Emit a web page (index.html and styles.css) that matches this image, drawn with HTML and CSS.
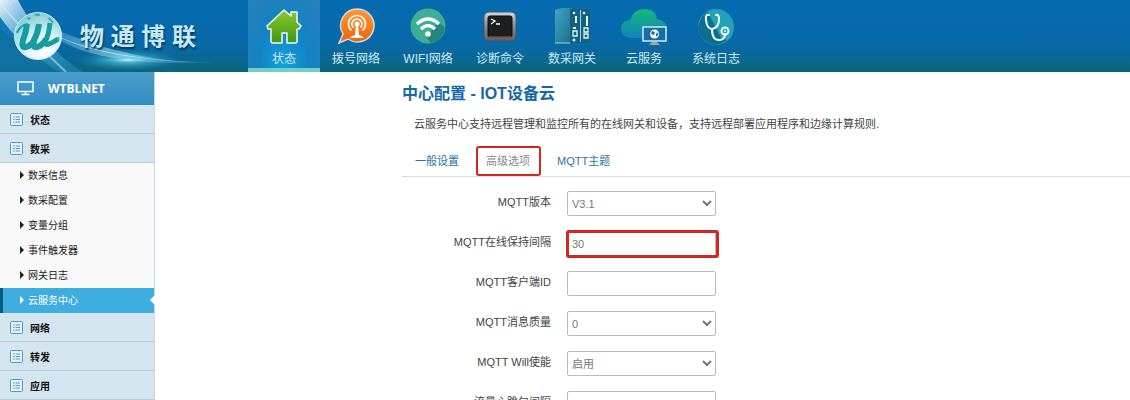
FILE: index.html
```html
<!DOCTYPE html>
<html lang="zh-CN">
<head>
  <meta charset="UTF-8">
  <title>中心配置 - IOT设备云</title>
  <link rel="stylesheet" href="styles.css">
</head>
<body>
  <header class="banner">
    <div class="brand">
      <svg class="brand-bg" viewBox="0 0 248 72" aria-hidden="true">
        <defs>
          <linearGradient id="beam" x1="0" y1="0" x2="1" y2="1">
            <stop offset="0" stop-color="#fff" stop-opacity=".9"/>
            <stop offset=".35" stop-color="#9ed8f5" stop-opacity=".55"/>
            <stop offset="1" stop-color="#2fb0cf" stop-opacity="0"/>
          </linearGradient>
          <linearGradient id="trail" x1="0" y1="0" x2="1" y2="0">
            <stop offset="0" stop-color="#7fd0f0" stop-opacity=".3"/>
            <stop offset=".55" stop-color="#d8f8ff"/>
            <stop offset="1" stop-color="#4ab8d8" stop-opacity="0"/>
          </linearGradient>
          <radialGradient id="flare">
            <stop offset="0" stop-color="#e8fcff"/>
            <stop offset=".25" stop-color="#7fdcf2" stop-opacity=".7"/>
            <stop offset="1" stop-color="#159cc8" stop-opacity="0"/>
          </radialGradient>
        </defs>
        <path d="M0 0H9C20 22 52 52 84 72H0Z" fill="#1e8fc4" opacity=".45"/>
        <path d="M0 0H18C28 20 48 46 80 72H60C32 55 12 34 0 17Z" fill="url(#beam)"/>
        <path d="M0 3C18 25 40 48 66 72" fill="none" stroke="#d9f1fc" stroke-width="2" opacity=".5"/>
        <path d="M0 28C24 50 42 62 58 72H0Z" fill="#0b6d9c" opacity=".7"/>
        <path d="M10 0C40 38 95 60 215 63" fill="none" stroke="url(#trail)" stroke-width="1"/>
        <path d="M30 18C62 50 105 65 205 63C135 60 85 44 30 18Z" fill="url(#trail)" opacity=".55"/>
        <ellipse cx="128" cy="60" rx="52" ry="11" fill="url(#flare)" opacity=".8"/>
        <ellipse cx="128" cy="60" rx="32" ry="3" fill="url(#flare)"/>
      </svg>
      <svg class="brand-ball" viewBox="0 0 48 50" aria-hidden="true">
        <defs>
          <radialGradient id="ball" cx=".6" cy=".8" r=".8">
            <stop offset="0" stop-color="#fff"/>
            <stop offset=".4" stop-color="#e2f5f6"/>
            <stop offset="1" stop-color="#84ccd6"/>
          </radialGradient>
        </defs>
        <circle cx="24" cy="25" r="23.5" fill="url(#ball)" stroke="#c9f0f4"/>
        <path d="M20 3L25 2L26 5L22 5ZM13 7l3-1 1 2-3 1ZM35 6l5 5-2 1-4-4ZM42 27l3-1 1 2-3 2Z" fill="#3ea9ae"/>
        <g fill="none" stroke="#169da3" stroke-linejoin="round">
          <path d="M3 22Q6 14 14 13" stroke-width="2"/>
          <path d="M13 13Q12 22 9 29Q7 37 12 36Q17 35 21 28" stroke-width="6"/>
          <path d="M25 13Q24 22 20 29Q18 37 23 36Q28 35 32 28" stroke-width="6"/>
          <path d="M36 12Q35 22 32 29Q30 35 35 33Q40 31 44 28" stroke-width="5"/>
        </g>
      </svg>
      <span class="brand-name">物 通 博 联</span>
    </div>
    <nav class="topnav">
      <a class="top-item current" href="#">
        <svg viewBox="0 0 40 40" aria-hidden="true">
          <defs><linearGradient id="house" x1="0" y1="0" x2="0" y2="1"><stop offset="0" stop-color="#8acb2c"/><stop offset="1" stop-color="#3f9517"/></linearGradient></defs>
          <path d="M20 4L27 10V6H33V16L37 20L35 23H33V35Q33 37 31 37H23V27H18V37H9Q7 37 7 35V23H4L3 20Z" fill="url(#house)" stroke="#f2faee" stroke-width="1.500" stroke-linejoin="round"/>
        </svg>
        <span>状态</span>
      </a>
      <a class="top-item" href="#">
        <svg viewBox="0 0 40 40" aria-hidden="true">
          <defs><linearGradient id="orange" x1="0" y1="0" x2="0" y2="1"><stop offset="0" stop-color="#ff9838"/><stop offset="1" stop-color="#e96408"/></linearGradient></defs>
          <path d="M21 3A16.500 16.500 0 1 1 12 33L3 37L7 28A16.500 16.500 0 0 1 21 3Z" fill="url(#orange)" stroke="#d9d6dc" stroke-width="1.500"/>
          <g fill="none" stroke="#fff" stroke-width="1.700" stroke-linecap="round">
            <path d="M15 24A8.500 8.500 0 1 1 27 24"/>
            <path d="M17 21A5 5 0 1 1 25 21"/>
          </g>
          <circle cx="21" cy="18" r="2.500" fill="#fff"/>
          <path d="M20 19H22L23 29Q27 30 28 32H14Q15 30 19 29Z" fill="#fff"/>
        </svg>
        <span>拨号网络</span>
      </a>
      <a class="top-item" href="#">
        <svg viewBox="0 0 40 40" aria-hidden="true">
          <circle cx="20" cy="20" r="17.500" fill="#3fae96"/>
          <path d="M31 16L37 22Q35 34 23 37L18 31Z" fill="#23867d"/>
          <g fill="none" stroke="#fff" stroke-width="3.200">
            <path d="M9 18Q20 8 31 18"/>
            <path d="M13 23Q20 16 27 23"/>
          </g>
          <circle cx="20" cy="28" r="2.800" fill="#fff"/>
        </svg>
        <span>WIFI网络</span>
      </a>
      <a class="top-item" href="#">
        <svg viewBox="0 0 40 40" aria-hidden="true">
          <defs><linearGradient id="metal" x1="0" y1="0" x2="0" y2="1"><stop offset="0" stop-color="#d3d7da"/><stop offset=".5" stop-color="#878d93"/><stop offset="1" stop-color="#5b6066"/></linearGradient></defs>
          <rect x="4" y="6" width="32" height="29" rx="5" fill="url(#metal)" stroke="#3f5670"/>
          <rect x="8" y="10" width="24" height="21" rx="2" fill="#1d1e22" stroke="#0b0b0d"/>
          <path d="M9 31H31" stroke="#a86d4c"/>
          <path d="M11 13l4 2-4 3M16 18h4" fill="none" stroke="#fff" stroke-width="1.300"/>
        </svg>
        <span>诊断命令</span>
      </a>
      <a class="top-item" href="#">
        <svg viewBox="0 0 40 40" aria-hidden="true">
          <defs><linearGradient id="rack" x1="0" y1="0" x2="1" y2="1"><stop offset="0" stop-color="#40a6c4"/><stop offset="1" stop-color="#176e8b"/></linearGradient></defs>
          <path d="M3 4L10 2H20V37H3Z" fill="url(#rack)"/>
          <path d="M18 3H28V37H18ZM29 3H38V37H29Z" fill="#14617f"/>
          <path d="M28.500 4V36M3 37H18" stroke="#a3d4df"/>
          <g fill="#e5f6fa">
            <circle cx="22" cy="7" r="1.300"/><circle cx="32" cy="7" r="1.300"/><circle cx="22" cy="34" r="1.500"/>
            <path d="M23 10h2v7h-2zM34 10h2v10h-2zM21 21h3v2h-3z"/>
          </g>
          <path d="M21 25h4v5h-4zM32 22h4v4h-4zM32 28h4v4h-4z" fill="none" stroke="#e5f6fa" stroke-width="1.300"/>
        </svg>
        <span>数采网关</span>
      </a>
      <a class="top-item" href="#">
        <svg class="wide" viewBox="0 0 48 40" aria-hidden="true">
          <defs><linearGradient id="cloud" x1="0" y1="0" x2="0" y2="1"><stop offset="0" stop-color="#13b97b"/><stop offset="1" stop-color="#1184b9"/></linearGradient></defs>
          <path d="M10 32Q1 30 1 22Q1 15 10 14Q14 2 26 3Q36 4 37 13Q47 15 47 23Q47 31 38 32Z" fill="url(#cloud)"/>
          <rect x="23" y="21" width="23" height="14" fill="#126fa0" stroke="#d4eaf3" stroke-width="1.500"/>
          <circle cx="34.500" cy="28" r="4.500" fill="#fff"/>
          <path d="M32 25l3 1-1 3-3-1ZM36 28l2-2v3l-2 2Z" fill="#126fa0"/>
          <path d="M32 36H37L40 39H29Z" fill="#a5a39a"/>
        </svg>
        <span>云服务</span>
      </a>
      <a class="top-item" href="#">
        <svg viewBox="0 0 40 40" aria-hidden="true">
          <circle cx="20" cy="21" r="18" fill="#23a2b8"/>
          <path d="M4 15Q7 7 12 6L25 32L31 34Q24 40 15 38Q2 33 2 21Z" fill="#0d6f8f"/>
          <g fill="none" stroke="#f3fcfd" stroke-width="2" stroke-linecap="round">
            <path d="M13 9Q9 8 10 14Q11 23 16 23Q23 22 23 13Q23 8 20 9"/>
            <path d="M16 23Q16 34 23 34Q29 34 29 28"/>
            <circle cx="29" cy="25" r="3.500"/>
          </g>
          <circle cx="29" cy="25" r="1" fill="#f3fcfd"/>
        </svg>
        <span>系统日志</span>
      </a>
    </nav>
  </header>

  <svg class="symbols" aria-hidden="true">
    <symbol id="list" viewBox="0 0 13 13">
      <rect x=".5" y=".5" width="12" height="12" rx="1" fill="#e4f2f8" stroke="#4f9cc2"/>
      <path d="M3 4h1.500M3 6.500h1.500M3 9h1.500M5.500 4H10M5.500 6.500H10M5.500 9H10" stroke="#4f9cc2"/>
    </symbol>
  </svg>

  <div class="page">
    <aside class="sidebar">
      <div class="side-head">
        <svg viewBox="0 0 17 15" aria-hidden="true">
          <path d="M1 1H16V10.500H1ZM8.500 11V13M4.500 13.500H12.500" fill="none" stroke="#fff" stroke-width="1.500"/>
        </svg>
        <span>WTBLNET</span>
      </div>
      <a class="side-item" href="#"><svg><use href="#list"/></svg>状态</a>
      <a class="side-item" href="#"><svg><use href="#list"/></svg>数采</a>
      <div class="submenu">
        <a href="#">数采信息</a>
        <a href="#">数采配置</a>
        <a href="#">变量分组</a>
        <a href="#">事件触发器</a>
        <a href="#">网关日志</a>
        <a class="active" href="#">云服务中心</a>
      </div>
      <a class="side-item" href="#"><svg><use href="#list"/></svg>网络</a>
      <a class="side-item" href="#"><svg><use href="#list"/></svg>转发</a>
      <a class="side-item" href="#"><svg><use href="#list"/></svg>应用</a>
    </aside>

    <main class="content">
      <h1>中心配置 - IOT设备云</h1>
      <p class="desc">云服务中心支持远程管理和监控所有的在线网关和设备，支持远程部署应用程序和边缘计算规则.</p>
      <nav class="tabs">
        <a href="#">一般设置</a>
        <a class="selected marked" href="#">高级选项</a>
        <a href="#">MQTT主题</a>
      </nav>
      <form class="settings">
        <div class="row">
          <label for="version">MQTT版本</label>
          <div class="field"><select id="version"><option>V3.1</option></select></div>
        </div>
        <div class="row">
          <label for="keepalive">MQTT在线保持间隔</label>
          <div class="field marked"><input id="keepalive" type="text" value="30"></div>
        </div>
        <div class="row">
          <label for="client">MQTT客户端ID</label>
          <div class="field"><input id="client" type="text"></div>
        </div>
        <div class="row">
          <label for="qos">MQTT消息质量</label>
          <div class="field"><select id="qos"><option>0</option></select></div>
        </div>
        <div class="row">
          <label for="will">MQTT Will使能</label>
          <div class="field"><select id="will"><option>启用</option></select></div>
        </div>
        <div class="row">
          <label for="heartbeat">流量心跳包间隔</label>
          <div class="field"><input id="heartbeat" type="text" value="60"></div>
        </div>
      </form>
    </main>
  </div>
</body>
</html>
```
FILE: styles.css
```css
* {
  box-sizing: border-box;
}
body {
  margin: 0;
  height: 100vh;
  overflow: hidden;
  display: flex;
  flex-direction: column;
  font-family: "Liberation Sans", "Noto Sans CJK SC", sans-serif;
  font-size: 11px;
  color: #444;
  background: #fff;
}
a {
  text-decoration: none;
}
.symbols {
  display: none;
}

/* banner */
.banner {
  display: flex;
  flex-shrink: 0;
  height: 72px;
  background: linear-gradient(180deg, #066bb0 0%, #0769aa 55%, #0b6892 85%, #0b6677 100%);
}
.brand {
  position: relative;
  display: flex;
  align-items: center;
  gap: 18px;
  width: 248px;
  padding-left: 14px;
  flex-shrink: 0;
}
.brand-bg {
  position: absolute;
  left: 0;
  top: 0;
  width: 248px;
  height: 72px;
}
.brand-ball {
  position: relative;
  width: 48px;
  height: 50px;
}
.brand-name {
  position: relative;
  padding-bottom: 4px;
  font-size: 24px;
  font-weight: bold;
  color: #c6e9f7;
  white-space: nowrap;
  text-shadow: 1px 2px 2px #04395f;
}
.topnav {
  display: flex;
}
.top-item {
  display: flex;
  flex-direction: column;
  align-items: center;
  gap: 5px;
  width: 72px;
  padding-top: 6px;
  color: #cfe8f5;
  font-size: 12px;
  line-height: 17px;
  border-bottom: 4px solid transparent;
}
.top-item svg {
  width: 40px;
  height: 40px;
}
.top-item svg.wide {
  width: 48px;
}
.top-item.current {
  background: radial-gradient(ellipse at 50% 100%, #11a0dc 0%, #1383c3 50%, #2a7fba 100%);
  border-bottom-color: #6fd0c4;
}

/* sidebar */
.page {
  display: flex;
  flex: 1;
  min-height: 0;
}
.sidebar {
  width: 155px;
  flex-shrink: 0;
  border-right: 1px solid #c5d9e3;
  background: #f9f9f9;
}
.side-head {
  display: flex;
  align-items: center;
  gap: 14px;
  height: 33px;
  padding-left: 17px;
  color: #fff;
  font: bold 12px "Open Sans", sans-serif;
  background: linear-gradient(180deg, #4a9ccd, #328dc3);
}
.side-head svg {
  width: 17px;
  height: 15px;
}
.side-item {
  display: flex;
  align-items: center;
  gap: 7px;
  height: 29px;
  padding-left: 10px;
  font-size: 10px;
  font-weight: bold;
  color: #111;
  background: #d4e5ef;
  border-bottom: 1px solid #b4cbd8;
}
.side-item svg {
  width: 13px;
  height: 13px;
}
.submenu a {
  position: relative;
  display: flex;
  align-items: center;
  gap: 4px;
  height: 25px;
  padding: 0 0 2px 20px;
  font-size: 10px;
  color: #222;
}
.submenu a::before {
  content: "";
  border: 4px solid transparent;
  border-left-color: currentColor;
  border-right-width: 0;
}
.submenu .active {
  padding-left: 17px;
  color: #fff;
  background: #3daedf;
  border-left: 3px solid #0b5a80;
}
.submenu .active::after {
  content: "";
  position: absolute;
  right: -1px;
  top: 7px;
  border: 5px solid transparent;
  border-right-color: #fff;
  border-left-width: 0;
}

/* content */
.content {
  flex: 1;
  min-width: 0;
  padding: 10px 0 0 247px;
  overflow: hidden;
}
h1 {
  margin: 0;
  font-size: 16px;
  line-height: 24px;
  color: #1467a8;
}
.desc {
  margin: 8px 0 0 12px;
  line-height: 20px;
}
.tabs {
  display: flex;
  gap: 1px;
  margin-top: 12px;
  border-bottom: 1px solid #ddd;
}
.tabs a {
  padding: 0 13px;
  line-height: 30px;
  color: #2a73a8;
}
.tabs .selected {
  color: #888;
}
.marked {
  position: relative;
}
/* red frame around the options that need attention */
.marked::after {
  content: "";
  position: absolute;
  inset: -1px -3px -2px -1px;
  border: 3px solid #d3261f;
  border-radius: 3px;
  pointer-events: none;
}
.tabs .marked::after {
  inset: 0 2px 0 3px;
  border-width: 2px;
}
.settings {
  display: flex;
  flex-direction: column;
  gap: 15px;
  padding-top: 14px;
}
.row {
  display: flex;
  gap: 16px;
}
.row label {
  width: 149px;
  line-height: 22px;
  text-align: right;
}
.field {
  width: 149px;
}
.field input,
.field select {
  display: block;
  width: 100%;
  height: 25px;
  margin: 0;
  padding: 0 4px;
  font: inherit;
  color: #777;
  background: #fff;
  border: 1px solid #bbb;
  border-radius: 2px;
}
.field select {
  padding: 0;
}
```
